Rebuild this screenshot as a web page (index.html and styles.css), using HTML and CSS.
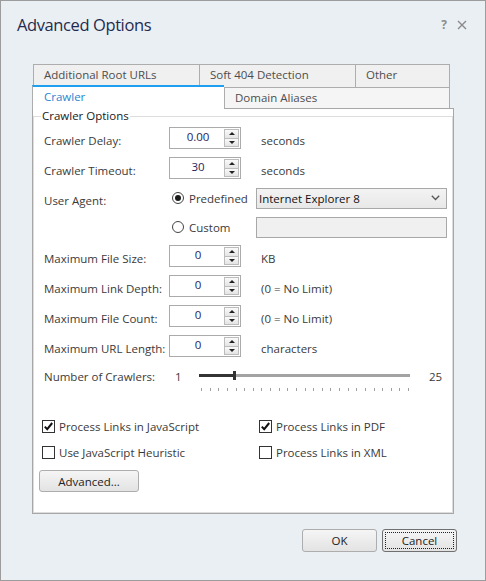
FILE: index.html
```html
<!DOCTYPE html>
<html>
<head>
<meta charset="utf-8">
<link rel="stylesheet" href="styles.css">
</head>
<body>
<div class="window">
  <div class="titlebar">
    <div class="title">Advanced Options</div>
    <div class="tb-btns">
      <span class="help">?</span>
      <svg class="close" width="10" height="10" viewBox="0 0 10 10"><path d="M1 1L9 9M9 1L1 9" stroke="#8a8a8a" stroke-width="1.4" fill="none"/></svg>
    </div>
  </div>

  <div class="tabs">
    <div class="tabrow top">
      <div class="tab t1">Additional Root URLs</div>
      <div class="tab t2">Soft 404 Detection</div>
      <div class="tab t3">Other</div>
    </div>
    <div class="tabrow bottom">
      <div class="tab sel">Crawler</div>
      <div class="tab t5">Domain Aliases</div>
    </div>
  </div>

  <div class="panel">
    <fieldset class="group">
      <legend>Crawler Options</legend>

      <div class="row">
        <span class="lbl">Crawler Delay:</span>
        <div class="spin"><span class="val">0.00</span><span class="arrows"><span class="half"><i class="up"></i></span><span class="half"><i class="dn"></i></span></span></div>
        <span class="unit">seconds</span>
      </div>
      <div class="row">
        <span class="lbl">Crawler Timeout:</span>
        <div class="spin"><span class="val">30</span><span class="arrows"><span class="half"><i class="up"></i></span><span class="half"><i class="dn"></i></span></span></div>
        <span class="unit">seconds</span>
      </div>
      <div class="row">
        <span class="lbl">User Agent:</span>
        <span class="ropt"><span class="radio on"></span><span class="rtxt">Predefined</span></span>
        <div class="select"><span class="seltxt">Internet Explorer 8</span><svg width="9" height="6" viewBox="0 0 9 6"><path d="M0.8 0.8L4.5 4.5L8.2 0.8" stroke="#555" stroke-width="1.3" fill="none"/></svg></div>
      </div>
      <div class="row short">
        <span class="lbl"></span>
        <span class="ropt"><span class="radio"></span><span class="rtxt">Custom</span></span>
        <div class="textfield"></div>
      </div>
      <div class="row">
        <span class="lbl">Maximum File Size:</span>
        <div class="spin"><span class="val">0</span><span class="arrows"><span class="half"><i class="up"></i></span><span class="half"><i class="dn"></i></span></span></div>
        <span class="unit">KB</span>
      </div>
      <div class="row">
        <span class="lbl">Maximum Link Depth:</span>
        <div class="spin"><span class="val">0</span><span class="arrows"><span class="half"><i class="up"></i></span><span class="half"><i class="dn"></i></span></span></div>
        <span class="unit">(0 = No Limit)</span>
      </div>
      <div class="row">
        <span class="lbl">Maximum File Count:</span>
        <div class="spin"><span class="val">0</span><span class="arrows"><span class="half"><i class="up"></i></span><span class="half"><i class="dn"></i></span></span></div>
        <span class="unit">(0 = No Limit)</span>
      </div>
      <div class="row">
        <span class="lbl">Maximum URL Length:</span>
        <div class="spin"><span class="val">0</span><span class="arrows"><span class="half"><i class="up"></i></span><span class="half"><i class="dn"></i></span></span></div>
        <span class="unit">characters</span>
      </div>
      <div class="row slrow">
        <span class="lbl">Number of Crawlers:</span>
        <span class="smin">1</span>
        <div class="slider">
          <div class="bar"><span class="filled"></span><span class="thumb"></span><span class="rest"></span></div>
          <div class="ticks">
            <i></i><i></i><i></i><i></i><i></i><i></i><i></i><i></i><i></i><i></i><i></i><i></i><i></i><i></i><i></i><i></i><i></i><i></i><i></i><i></i><i></i><i></i><i></i><i></i><i></i>
          </div>
        </div>
        <span class="smax">25</span>
      </div>

      <div class="cbrow first">
        <span class="cbitem"><span class="cb"><svg width="11" height="11" viewBox="0 0 11 11"><path d="M1.8 5.6L4.2 8.2L9.2 2" stroke="#111" stroke-width="2" fill="none"/></svg></span><span class="cbtxt">Process Links in JavaScript</span></span>
        <span class="cbitem"><span class="cb"><svg width="11" height="11" viewBox="0 0 11 11"><path d="M1.8 5.6L4.2 8.2L9.2 2" stroke="#111" stroke-width="2" fill="none"/></svg></span><span class="cbtxt">Process Links in PDF</span></span>
      </div>
      <div class="cbrow">
        <span class="cbitem"><span class="cb"></span><span class="cbtxt">Use JavaScript Heuristic</span></span>
        <span class="cbitem"><span class="cb"></span><span class="cbtxt">Process Links in XML</span></span>
      </div>
      <div class="advrow">
        <button class="btn adv">Advanced...</button>
      </div>
    </fieldset>
  </div>

  <div class="footer">
    <button class="btn ok">OK</button>
    <button class="btn cancel"><span class="focus">Cancel</span></button>
  </div>
</div>
</body>
</html>
```

FILE: styles.css
```css
* { box-sizing: border-box; }
html, body { margin: 0; padding: 0; }
body {
  width: 486px;
  height: 581px;
  overflow: hidden;
  font-family: "Open Sans", "Noto Sans", sans-serif;
  font-size: 11.5px;
  color: #3a3a3a;
}
.window {
  width: 486px;
  height: 581px;
  border: 1px solid #9c9c9c;
  background: #eaeff4;
  display: flex;
  flex-direction: column;
}
.titlebar {
  height: 63px;
  display: flex;
  align-items: flex-start;
  padding: 13px 0 0 16px;
  flex: none;
}
.title {
  flex: 1;
  font-size: 16.5px;
  line-height: 22px;
  color: #1f2b4d;
  letter-spacing: -0.4px;
}
.tb-btns {
  display: flex;
  align-items: center;
  gap: 10px;
  padding: 5px 18px 0 0;
}
.help {
  font-size: 12px;
  font-weight: bold;
  color: #8d8d8d;
  line-height: 12px;
}
.close { display: block; }

/* tabs */
.tabs { margin-left: 31px; width: 422px; flex: none; }
.tabrow { display: flex; }
.tabrow.top { padding-left: 1px; height: 23px; }
.tab {
  border: 1px solid #adadad;
  border-bottom: none;
  border-right: none;
  background: #f0f0f0;
  color: #4d4d4d;
  padding-left: 10px;
  white-space: nowrap;
  flex: none;
}
.tabrow.top .tab { height: 23px; line-height: 20px; }
.t1 { width: 166px; }
.t2 { width: 156px; }
.t3 { width: 95px; border-right: 1px solid #adadad; }
.tabrow.bottom { height: 21px; }
.tab.sel {
  width: 192px;
  height: 24px;
  margin-top: -2px;
  border-top: 2px solid #1e9ff0;
  background: #fff;
  color: #2a86d0;
  line-height: 20px;
  padding-left: 11px;
  position: relative;
  z-index: 1;
}
.t5 {
  width: 226px;
  height: 21px;
  background: #f5f5f5;
  border-right: 1px solid #adadad;
  line-height: 20px;
}

/* panel */
.panel {
  margin-left: 31px;
  width: 422px;
  height: 406px;
  border: 1px solid #a7a7a7;
  background: #fff;
  display: flex;
  flex-direction: column;
  flex: none;
}
.group {
  flex: 1;
  margin: 0;
  padding: 0;
  min-width: 0;
  border: 1px solid #dddddd;
}
.group legend {
  margin-left: 7px;
  padding: 0 1px;
  line-height: 14px;
  color: #1a1a1a;
}

.row {
  display: flex;
  align-items: center;
  height: 30px;
  padding-left: 10px;
}
.row.short { height: 28px; }
.lbl {
  width: 125px;
  flex: none;
  padding-top: 5px;
  line-height: 15px;
  white-space: nowrap;
}
.spin {
  width: 72px;
  height: 22px;
  border: 1px solid #ababab;
  background: #fff;
  display: flex;
  flex: none;
}
.val {
  flex: 1;
  text-align: center;
  color: #1e1e5c;
  line-height: 16px;
  padding-top: 1px;
  padding-left: 2px;
}
.arrows {
  width: 15px;
  margin: 1px 1px 1px 0;
  display: flex;
  flex-direction: column;
}
.half {
  flex: 1;
  border: 1px solid #bcbcbc;
  background: linear-gradient(#fafafa, #e4e4e4);
  display: flex;
  align-items: center;
  justify-content: center;
}
.half + .half { border-top: none; }
.up, .dn { width: 0; height: 0; border-left: 3px solid transparent; border-right: 3px solid transparent; }
.up { border-bottom: 3px solid #222; }
.dn { border-top: 3px solid #222; }
.unit {
  margin-left: 20px;
  padding-top: 5px;
  line-height: 15px;
  white-space: nowrap;
}

.ropt {
  width: 87px;
  flex: none;
  display: flex;
  align-items: center;
  padding-left: 3px;
}
.radio {
  width: 12px;
  height: 12px;
  border: 1px solid #444;
  border-radius: 50%;
  background: #fff;
  display: flex;
  align-items: center;
  justify-content: center;
  flex: none;
}
.radio.on::after {
  content: "";
  width: 6px;
  height: 6px;
  border-radius: 50%;
  background: #1a1a1a;
}
.rtxt { margin-left: 5px; line-height: 15px; }
.select {
  width: 191px;
  height: 21px;
  border: 1px solid #a8a8a8;
  background: linear-gradient(#f3f3f3, #e8e8e8);
  display: flex;
  align-items: center;
  justify-content: space-between;
  padding: 0 6px 0 2px;
  color: #111;
  flex: none;
}
.textfield {
  width: 191px;
  height: 21px;
  border: 1px solid #a8a8a8;
  background: #f0f0f0;
  flex: none;
}

.slrow { align-items: flex-start; }
.slrow .lbl, .smin, .smax { padding-top: 8px; line-height: 15px; }
.smin { width: 30px; padding-left: 6px; flex: none; }
.slider { width: 211px; flex: none; }
.bar {
  margin-top: 10px;
  height: 9px;
  display: flex;
  align-items: center;
}
.filled { width: 34px; height: 3px; background: #333; }
.thumb { width: 3px; height: 9px; background: #333; }
.rest { flex: 1; height: 3px; background: #a3a3a3; }
.ticks {
  margin-top: 8px;
  height: 3px;
  display: flex;
  justify-content: space-between;
  padding: 0 1px 0 2px;
}
.ticks i { width: 1px; height: 3px; background: #a0a0a0; }
.smax { margin-left: 19px; }

.cbrow {
  display: flex;
  align-items: center;
  height: 26px;
  padding-left: 8px;
}
.cbrow.first { margin-top: 22px; }
.cbitem { display: flex; align-items: center; flex: none; }
.cbitem:first-child { width: 217px; }
.cb {
  width: 13px;
  height: 13px;
  border: 1px solid #333;
  background: #fff;
  display: flex;
  align-items: center;
  justify-content: center;
  flex: none;
}
.cb svg { display: block; }
.cbtxt { margin-left: 4px; line-height: 15px; white-space: nowrap; }

.advrow { padding: 5px 0 0 5px; }
.btn {
  font-family: inherit;
  font-size: 11.5px;
  color: #222;
  border: 1px solid #adadad;
  border-radius: 3px;
  background: linear-gradient(#f5f5f5, #e3e3e3);
  padding: 0;
  margin: 0;
}
.adv { width: 100px; height: 22px; }

.footer {
  display: flex;
  justify-content: flex-end;
  gap: 5px;
  padding: 15px 28px 0 0;
}
.ok, .cancel { width: 75px; height: 23px; }
.cancel {
  border-color: #707070;
  padding: 2px;
  display: flex;
}
.focus {
  flex: 1;
  border: 1px dotted #222;
  display: flex;
  align-items: center;
  justify-content: center;
}
```
